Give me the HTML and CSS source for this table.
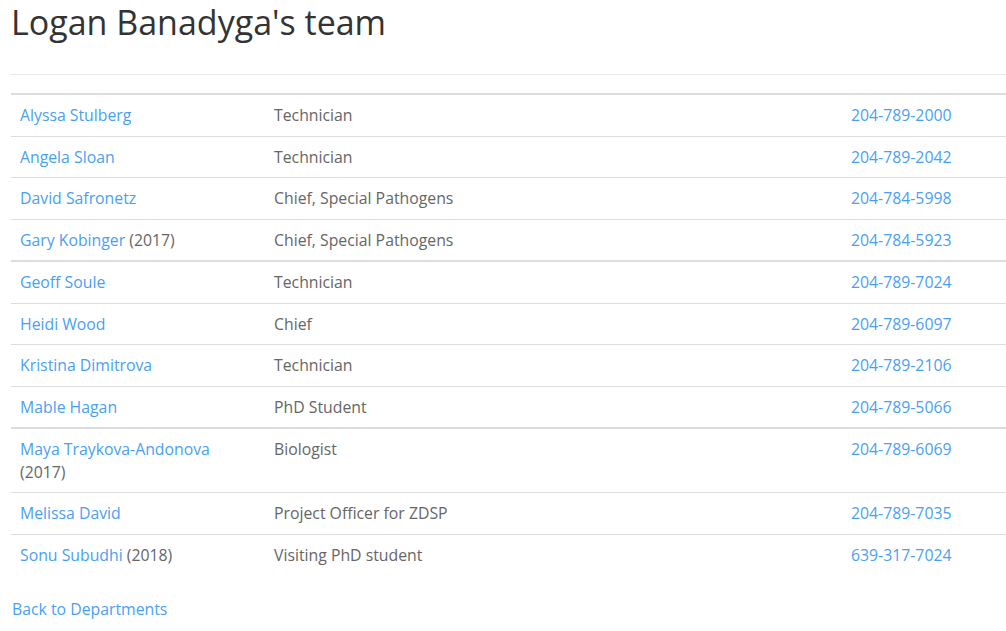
FILE: index.html
```html
<!DOCTYPE html>
<html lang="en">
<head>
<meta charset="utf-8">
<title>Logan Banadyga's team</title>
<link rel="stylesheet" href="styles.css">
</head>
<body>
<div class="page">
  <h1 class="title">Logan Banadyga's team</h1>
  <hr class="rule">
  <table class="team">
    <colgroup>
      <col class="c-name">
      <col class="c-role">
      <col class="c-phone">
    </colgroup>
    <tbody>
      <tr><td><a href="#">Alyssa Stulberg</a></td><td>Technician</td><td><a href="#">204-789-2000</a></td></tr>
      <tr><td><a href="#">Angela Sloan</a></td><td>Technician</td><td><a href="#">204-789-2042</a></td></tr>
      <tr><td><a href="#">David Safronetz</a></td><td>Chief, Special Pathogens</td><td><a href="#">204-784-5998</a></td></tr>
      <tr><td><a href="#">Gary Kobinger</a> (2017)</td><td>Chief, Special Pathogens</td><td><a href="#">204-784-5923</a></td></tr>
    </tbody>
    <tbody>
      <tr><td><a href="#">Geoff Soule</a></td><td>Technician</td><td><a href="#">204-789-7024</a></td></tr>
      <tr><td><a href="#">Heidi Wood</a></td><td>Chief</td><td><a href="#">204-789-6097</a></td></tr>
      <tr><td><a href="#">Kristina Dimitrova</a></td><td>Technician</td><td><a href="#">204-789-2106</a></td></tr>
      <tr><td><a href="#">Mable Hagan</a></td><td>PhD Student</td><td><a href="#">204-789-5066</a></td></tr>
    </tbody>
    <tbody>
      <tr><td><a href="#">Maya Traykova-Andonova</a><br>(2017)</td><td>Biologist</td><td><a href="#">204-789-6069</a></td></tr>
      <tr><td><a href="#">Melissa David</a></td><td>Project Officer for ZDSP</td><td><a href="#">204-789-7035</a></td></tr>
      <tr><td><a href="#">Sonu Subudhi</a> (2018)</td><td>Visiting PhD student</td><td><a href="#">639-317-7024</a></td></tr>
    </tbody>
  </table>
  <p class="back"><a href="#">Back to Departments</a></p>
</div>
</body>
</html>
```

FILE: styles.css
```css
html, body {
  margin: 0;
  padding: 0;
  background: #fff;
  overflow: hidden;
}

body {
  font-family: "Open Sans", "Liberation Sans", sans-serif;
  font-size: 15.8px;
  line-height: 22.5px;
  color: #666;
}

a {
  color: #4a9ff5;
  text-decoration: none;
}

.page {
  padding: 0 0 0 11px;
}

.title {
  margin: 4px 0 0;
  font-size: 34px;
  font-weight: 400;
  line-height: 1.1;
  color: #333;
}

.rule {
  margin: 33px 0 0;
  border: 0;
  border-top: 1px solid #e6e6e6;
  height: 0;
}

.team {
  margin: 18px 0 23px;
  width: 995px;
  border-collapse: collapse;
  table-layout: fixed;
}

.c-name { width: 254px; }
.c-role { width: 577px; }

.team tbody {
  border-top: 2px solid #ddd;
}

.team td {
  padding: 9px 8px 9px 9px;
  vertical-align: top;
  text-align: left;
  border-top: 1px solid #ddd;
}

.team tbody tr:first-child td {
  border-top: 0;
}

.back {
  margin: 0;
  padding-left: 1px;
}
```
